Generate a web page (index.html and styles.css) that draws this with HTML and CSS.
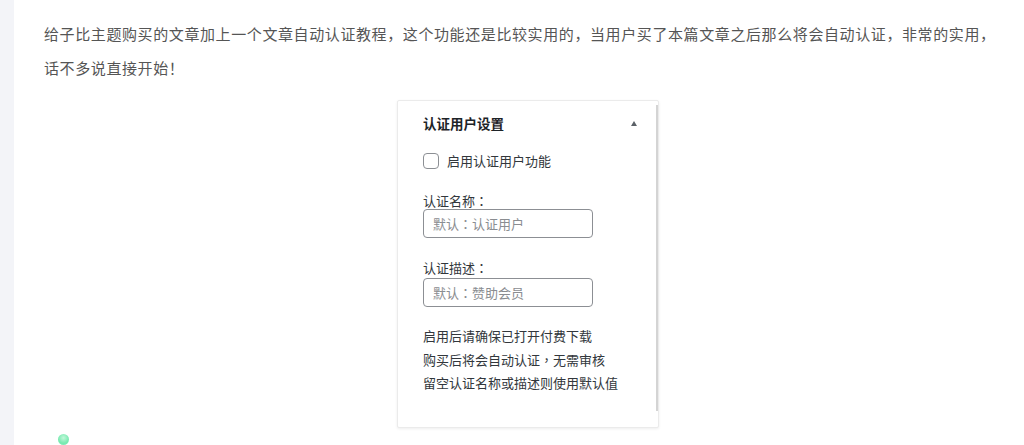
FILE: index.html
```html
<!DOCTYPE html>
<html lang="zh-CN">
<head>
<meta charset="utf-8">
<title>认证用户设置</title>
<link rel="stylesheet" href="styles.css">
</head>
<body>
<div class="page">
  <aside class="rail"></aside>
  <main class="content">
    <p class="intro">给子比主题购买的文章加上一个文章自动认证教程，这个功能还是比较实用的，当用户买了本篇文章之后那么将会自动认证，非常的实用，话不多说直接开始！</p>
    <div class="card">
      <div class="card-head">
        <span class="card-title">认证用户设置</span>
        <span class="toggle"></span>
      </div>
      <label class="check-row"><span class="checkbox"></span><span>启用认证用户功能</span></label>
      <div class="field-label first">认证名称<span class="pc" lang="zh-TW">：</span></div>
      <div class="input"><span class="ph">默认<span class="pc" lang="zh-TW">：</span>认证用户</span></div>
      <div class="field-label">认证描述<span class="pc" lang="zh-TW">：</span></div>
      <div class="input second"><span class="ph">默认<span class="pc" lang="zh-TW">：</span>赞助会员</span></div>
      <div class="notes">
        <div>启用后请确保已打开付费下载</div>
        <div>购买后将会自动认证<span class="pc" lang="zh-TW">，</span>无需审核</div>
        <div>留空认证名称或描述则使用默认值</div>
      </div>
    </div>
    <div class="dot"></div>
  </main>
</div>
</body>
</html>
```
FILE: styles.css
```css
html, body {
  margin: 0;
  padding: 0;
  background: #ffffff;
  height: 100%;
  overflow: hidden;
}
body {
  font-family: "Noto Sans CJK SC", "Noto Sans", sans-serif;
}
.page {
  display: flex;
  height: 445px;
}
.rail {
  width: 14px;
  flex: none;
  background: #f3f4f8;
}
.content {
  flex: 1;
  padding-left: 30px;
}
.intro {
  margin: 17px 0 0 0;
  width: 958px;
  font-size: 15px;
  line-height: 34px;
  letter-spacing: 0.6px;
  color: #555555;
}
.card {
  position: relative;
  box-sizing: border-box;
  width: 262px;
  height: 328px;
  margin: 15px 0 0 353px;
  padding: 13px 20px 0 25px;
  border: 1px solid #ebebeb;
  border-radius: 2px;
  box-shadow: 0 1px 3px rgba(0, 0, 0, 0.07);
  background: #fff;
  color: #32373c;
  font-size: 13px;
}
.card::after {
  content: "";
  position: absolute;
  right: 0;
  top: 4px;
  bottom: 16px;
  width: 2px;
  background: #d4d4d4;
}
.pc {
  font-family: "Noto Sans CJK TC", "Noto Sans CJK SC", sans-serif;
}
.card-head {
  display: flex;
  justify-content: space-between;
  align-items: center;
  height: 20px;
  margin-top: -1px;
}
.card-title {
  font-size: 13.5px;
  font-weight: 700;
  color: #1d2327;
  line-height: 20px;
}
.toggle {
  width: 0;
  height: 0;
  border-left: 3.5px solid transparent;
  border-right: 3.5px solid transparent;
  border-bottom: 5px solid #5b6167;
  margin-right: 1px;
}
.check-row {
  display: flex;
  align-items: center;
  gap: 8px;
  height: 20px;
  margin-top: 18px;
  line-height: 20px;
}
.checkbox {
  box-sizing: border-box;
  width: 16px;
  height: 16px;
  border: 1px solid #8c8f94;
  border-radius: 4px;
  background: #fff;
}
.field-label {
  line-height: 16px;
  margin-top: 22px;
}
.field-label.first {
  margin-top: 22px;
}
.input {
  box-sizing: border-box;
  width: 170px;
  height: 29px;
  border: 1px solid #8c8f94;
  border-radius: 4px;
  padding-left: 9px;
  display: flex;
  align-items: center;
}
.input.second {
  margin-top: 2px;
}
.ph {
  color: #8a8d91;
  font-size: 13px;
}
.notes {
  margin-top: 17px;
  line-height: 23.5px;
  color: #32373c;
}
.dot {
  width: 11px;
  height: 11px;
  margin: 6px 0 0 14px;
  border-radius: 50%;
  background: radial-gradient(circle at 50% 35%, #c2f8da 0%, #78eab0 60%, #8aedbf 100%);
}
```
